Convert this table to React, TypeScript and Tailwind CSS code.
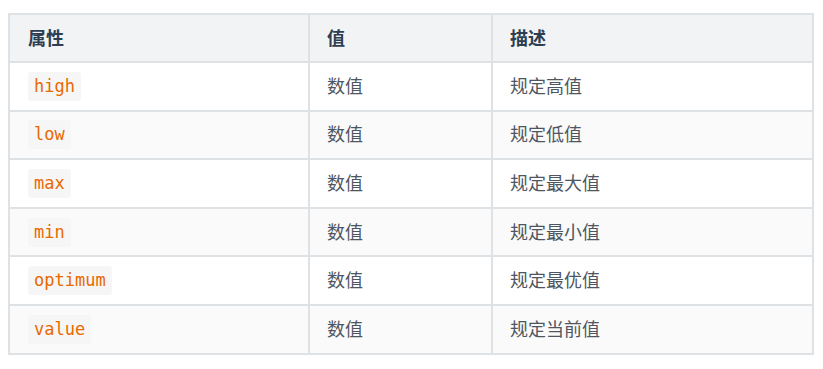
import React from "react";

const rows = [
  { attr: "high", value: "数值", desc: "规定高值" },
  { attr: "low", value: "数值", desc: "规定低值" },
  { attr: "max", value: "数值", desc: "规定最大值" },
  { attr: "min", value: "数值", desc: "规定最小值" },
  { attr: "optimum", value: "数值", desc: "规定最优值" },
  { attr: "value", value: "数值", desc: "规定当前值" },
];

const App = () => {
  return (
    <div
      className="w-[823px] h-[369px] bg-white pt-[13px] pl-[8px]"
      style={{ fontFamily: '"Noto Sans", "Noto Sans CJK SC", sans-serif' }}
    >
      <table className="border-collapse w-[804px] table-fixed text-[18px]">
        <colgroup>
          <col className="w-[300px]" />
          <col className="w-[183px]" />
          <col className="w-[321px]" />
        </colgroup>
        <thead>
          <tr className="h-[48px] bg-[#f2f3f4]">
            <th className="border-2 border-[#dfe2e5] text-left font-bold text-[#2c3e50] px-[18px] align-middle">属性</th>
            <th className="border-2 border-[#dfe2e5] text-left font-bold text-[#2c3e50] px-[17px] align-middle">值</th>
            <th className="border-2 border-[#dfe2e5] text-left font-bold text-[#2c3e50] px-[17px] align-middle">描述</th>
          </tr>
        </thead>
        <tbody>
          {rows.map((r, i) => (
            <tr key={r.attr} className={i % 2 === 1 ? "h-[48.6px] bg-[#fafafa]" : "h-[48.6px] bg-white"}>
              <td className="border-2 border-[#dfe2e5] px-[18px] align-middle">
                <code
                  className="inline-block rounded-[3px] bg-[#f6f6f6] px-[6px] leading-[29px] text-[17px] text-[#e96900]"
                  style={{ fontFamily: '"DejaVu Sans Mono", "Liberation Mono", monospace' }}
                >
                  {r.attr}
                </code>
              </td>
              <td className="border-2 border-[#dfe2e5] px-[17px] align-middle text-[#4e5661]">{r.value}</td>
              <td className="border-2 border-[#dfe2e5] px-[17px] align-middle text-[#4e5661]">{r.desc}</td>
            </tr>
          ))}
        </tbody>
      </table>
    </div>
  );
};

export default App;
